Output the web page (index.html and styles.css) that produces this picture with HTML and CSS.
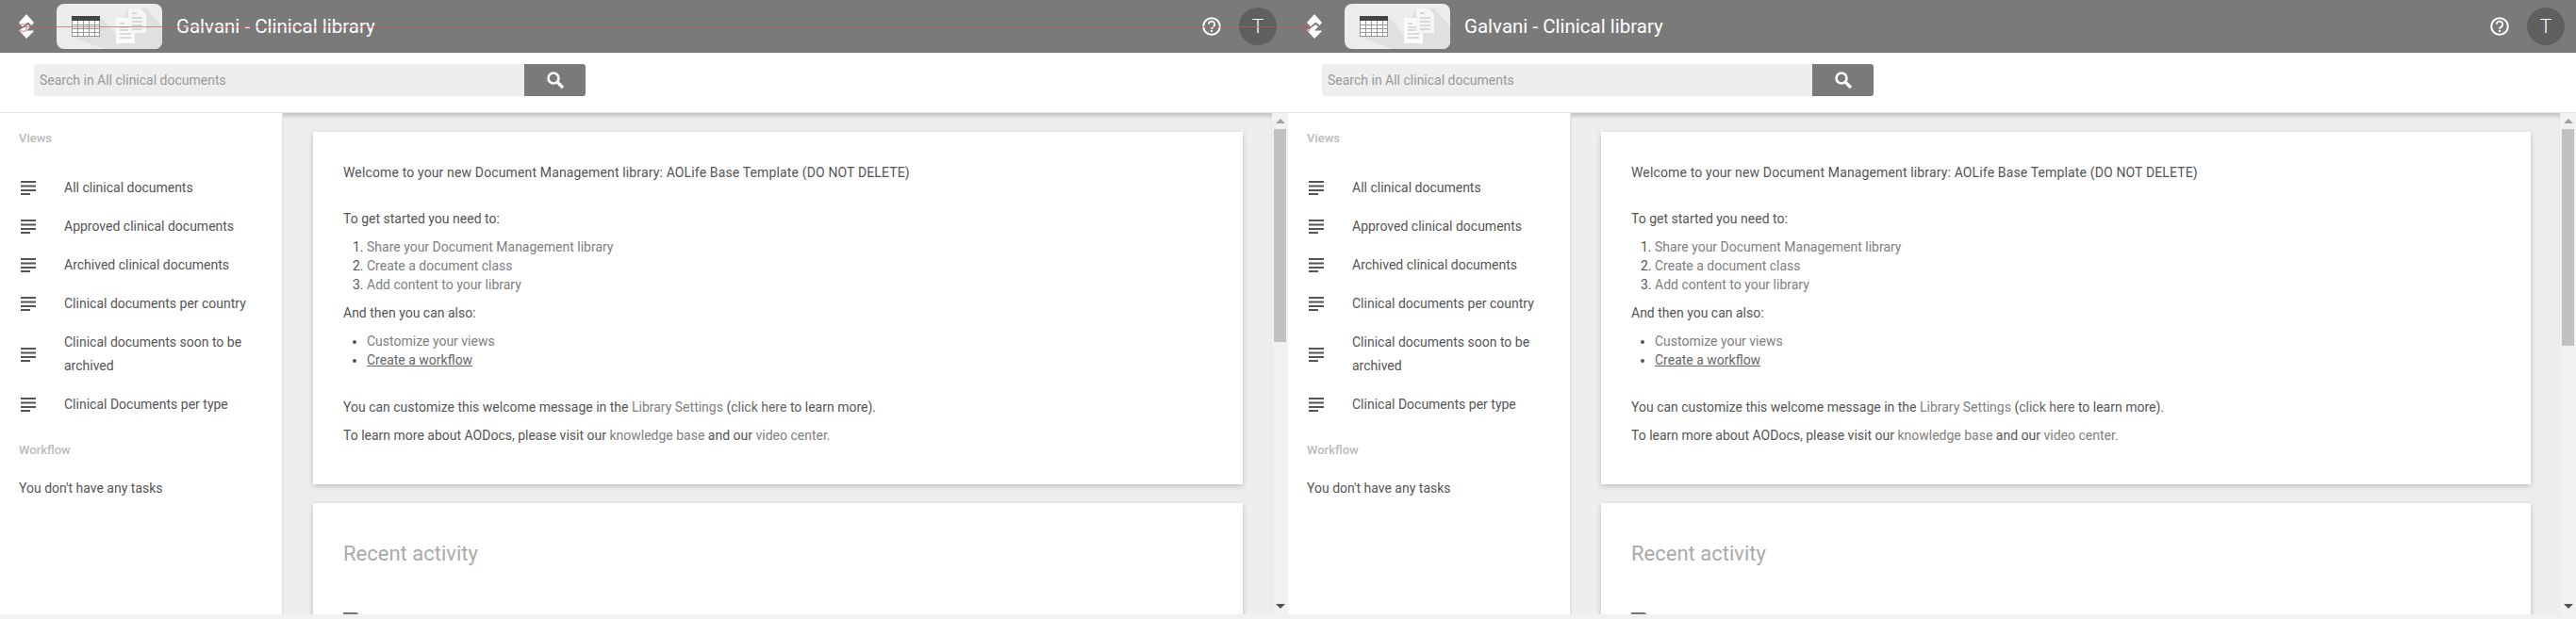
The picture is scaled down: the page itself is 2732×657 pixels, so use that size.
FILE: index.html
```html
<!DOCTYPE html>
<html lang="en">
<head>
    <meta charset="UTF-8">
    <title>Galvani - Clinical library</title>
    <link rel="stylesheet" href="styles.css">
</head>
<body>
    <svg class="defs" width="0" height="0">
        <symbol id="i-switch" viewBox="0 0 16 26">
            <path fill="#fff" d="M8 0 16 9 13.5 12 9.5 8.5 3.5 13.5 0 9Z"/>
            <path fill="#fff" d="M4 15 9.5 11 12 13.5 8 17.5 15 17.5 16 18 8 26 0 17Z"/>
        </symbol>
        <symbol id="i-logo" viewBox="0 0 112 48">
            <path fill="#e0e0e0" d="M16 13H46L76 48H51L16 35Z"/>
            <path fill="#e0e0e0" d="M76 5H95L112 24V48H76L63 33Z"/>
            <rect x="16" y="13" width="30" height="22" fill="#fff"/>
            <rect x="16" y="13" width="30" height="5" fill="#444"/>
            <path stroke="#999" fill="none" d="M16.5 18V35M22.5 18V35M28.5 18V35M34.5 18V35M40.5 18V35M45.5 18V35M16 22.5H46M16 26.5H46M16 30.5H46M16 34.5H46"/>
            <path fill="#fafafa" d="M63 15H83V42H63Z"/>
            <path stroke="#bbb" fill="none" d="M67 21H72M67 25H79M67 28H79M67 32H79M67 36H79"/>
            <path fill="#f5f5f5" d="M76 5H89L95 11V31H76Z"/>
            <path stroke="#bbb" fill="none" d="M80 10H85M80 15H91M80 19H91M80 23H91M80 27H91"/>
        </symbol>
        <symbol id="i-help" viewBox="0 0 20 20">
            <circle cx="10" cy="10" r="8.8" fill="none" stroke="#fff" stroke-width="2"/>
            <path d="M6.8 7.8A3.2 3.2 0 1 1 11.6 10.6C10.5 11.3 10 11.7 10 13" fill="none" stroke="#fff" stroke-width="1.8"/>
            <rect x="9" y="14" width="2" height="2" fill="#fff"/>
        </symbol>
        <symbol id="i-search" viewBox="0 0 20 20">
            <circle cx="8" cy="8" r="5.5" fill="none" stroke="#fff" stroke-width="2.6"/>
            <path d="M12 12 18 18" stroke="#fff" stroke-width="3.2"/>
        </symbol>
        <symbol id="i-list" viewBox="0 0 16 15">
            <path stroke="#555" stroke-width="2" d="M0 1H16M0 5.5H16M0 10H16M0 14H10"/>
        </symbol>
    </svg>

    <section class="pane">
        <header class="topbar">
            <svg class="switch-icon"><use href="#i-switch"/></svg>
            <svg class="logo"><use href="#i-logo"/></svg>
            <h1 class="title">Galvani - Clinical library</h1>
            <svg class="help-icon"><use href="#i-help"/></svg>
            <div class="avatar">T</div>
        </header>
        <div class="searchrow">
            <input class="search-input" type="text" placeholder="Search in All clinical documents">
            <button class="search-btn" type="button"><svg class="search-icon"><use href="#i-search"/></svg></button>
        </div>
        <div class="pane-body">
            <aside class="sidebar">
                <div class="side-label">Views</div>
                <ul class="views">
                    <li class="view"><svg class="list-icon"><use href="#i-list"/></svg><span>All clinical documents</span></li>
                    <li class="view"><svg class="list-icon"><use href="#i-list"/></svg><span>Approved clinical documents</span></li>
                    <li class="view"><svg class="list-icon"><use href="#i-list"/></svg><span>Archived clinical documents</span></li>
                    <li class="view"><svg class="list-icon"><use href="#i-list"/></svg><span>Clinical documents per country</span></li>
                    <li class="view"><svg class="list-icon"><use href="#i-list"/></svg><span>Clinical documents soon to be archived</span></li>
                    <li class="view"><svg class="list-icon"><use href="#i-list"/></svg><span>Clinical Documents per type</span></li>
                </ul>
                <div class="side-label side-label-workflow">Workflow</div>
                <p class="no-tasks">You don't have any tasks</p>
            </aside>
            <main class="content">
                <div class="card card-welcome">
                    <p class="welcome-line">Welcome to your new Document Management library: AOLife Base Template (DO NOT DELETE)</p>
                    <p>To get started you need to:</p>
                    <ol class="steps">
                        <li><a>Share your Document Management library</a></li>
                        <li><a>Create a document class</a></li>
                        <li><a>Add content to your library</a></li>
                    </ol>
                    <p>And then you can also:</p>
                    <ul class="steps">
                        <li><a>Customize your views</a></li>
                        <li><a class="underlined">Create a workflow</a></li>
                    </ul>
                    <p class="customize-line">You can customize this welcome message in the <a>Library Settings</a> (<a class="dark">click here</a> to learn more).</p>
                    <p class="learn-line">To learn more about AODocs, please visit our <a>knowledge base</a> and our <a>video center.</a></p>
                </div>
                <div class="card card-activity">
                    <h2 class="activity-title">Recent activity</h2>
                    <svg class="activity-icon" width="20" height="20"><path d="M1 20V2H14L19 7V20" fill="none" stroke="#777" stroke-width="2"/></svg>
                </div>
            </main>
            <div class="scrollbar">
                <span class="arrow-up"></span>
                <span class="thumb"></span>
                <span class="arrow-down"></span>
            </div>
        </div>
        <div class="bottom-strip"></div>
    </section>

    <section class="pane pane-right">
        <header class="topbar">
            <svg class="switch-icon"><use href="#i-switch"/></svg>
            <svg class="logo"><use href="#i-logo"/></svg>
            <h1 class="title">Galvani - Clinical library</h1>
            <svg class="help-icon"><use href="#i-help"/></svg>
            <div class="avatar">T</div>
        </header>
        <div class="searchrow">
            <input class="search-input" type="text" placeholder="Search in All clinical documents">
            <button class="search-btn" type="button"><svg class="search-icon"><use href="#i-search"/></svg></button>
        </div>
        <div class="pane-body">
            <aside class="sidebar">
                <div class="side-label">Views</div>
                <ul class="views">
                    <li class="view"><svg class="list-icon"><use href="#i-list"/></svg><span>All clinical documents</span></li>
                    <li class="view"><svg class="list-icon"><use href="#i-list"/></svg><span>Approved clinical documents</span></li>
                    <li class="view"><svg class="list-icon"><use href="#i-list"/></svg><span>Archived clinical documents</span></li>
                    <li class="view"><svg class="list-icon"><use href="#i-list"/></svg><span>Clinical documents per country</span></li>
                    <li class="view"><svg class="list-icon"><use href="#i-list"/></svg><span>Clinical documents soon to be archived</span></li>
                    <li class="view"><svg class="list-icon"><use href="#i-list"/></svg><span>Clinical Documents per type</span></li>
                </ul>
                <div class="side-label side-label-workflow">Workflow</div>
                <p class="no-tasks">You don't have any tasks</p>
            </aside>
            <main class="content">
                <div class="card card-welcome">
                    <p class="welcome-line">Welcome to your new Document Management library: AOLife Base Template (DO NOT DELETE)</p>
                    <p>To get started you need to:</p>
                    <ol class="steps">
                        <li><a>Share your Document Management library</a></li>
                        <li><a>Create a document class</a></li>
                        <li><a>Add content to your library</a></li>
                    </ol>
                    <p>And then you can also:</p>
                    <ul class="steps">
                        <li><a>Customize your views</a></li>
                        <li><a class="underlined">Create a workflow</a></li>
                    </ul>
                    <p class="customize-line">You can customize this welcome message in the <a>Library Settings</a> (<a class="dark">click here</a> to learn more).</p>
                    <p class="learn-line">To learn more about AODocs, please visit our <a>knowledge base</a> and our <a>video center.</a></p>
                </div>
                <div class="card card-activity">
                    <h2 class="activity-title">Recent activity</h2>
                    <svg class="activity-icon" width="20" height="20"><path d="M1 20V2H14L19 7V20" fill="none" stroke="#777" stroke-width="2"/></svg>
                </div>
            </main>
            <div class="scrollbar">
                <span class="arrow-up"></span>
                <span class="thumb"></span>
                <span class="arrow-down"></span>
            </div>
        </div>
        <div class="bottom-strip"></div>
    </section>

    <div class="red-line"></div>
</body>
</html>
```

FILE: styles.css
```css
* { box-sizing: border-box; }
html, body { height: 100%; }
body { margin: 0; display: flex; width: 2732px; height: 657px; overflow: hidden; position: relative; font-family: Roboto, "Liberation Sans", Arial, sans-serif; font-size: 14px; color: #555; background: #fff; }
.defs { position: absolute; }
.pane { width: 1366px; height: 657px; display: flex; flex-direction: column; }

/* top bar */
.topbar { height: 56px; flex: none; display: flex; align-items: center; padding: 0 12px 0 20px; background: #7a7a7a; color: #fff; }
.switch-icon { width: 16px; height: 26px; flex: none; }
.logo { width: 112px; height: 48px; flex: none; margin-left: 24px; background: #ececec; border-radius: 8px; }
.title { margin: 0 0 0 15px; flex: 1; font-size: 20.5px; font-weight: 400; }
.help-icon { width: 20px; height: 20px; flex: none; }
.avatar { width: 40px; height: 40px; flex: none; margin-left: 19px; border-radius: 50%; background: #5f5f5f; display: flex; align-items: center; justify-content: center; font-size: 21px; font-weight: 300; }

/* search */
.searchrow { height: 64px; flex: none; display: flex; align-items: flex-start; padding: 12px 0 0 36px; border-bottom: 1px solid #e3e3e3; }
.search-input { width: 520px; height: 34px; padding: 0 6px; border: 0; border-radius: 3px 0 0 3px; background: #eee; font: 14px Roboto, "Liberation Sans", sans-serif; }
.search-input::placeholder { color: #999; opacity: 1; }
.search-btn { width: 65px; height: 34px; padding: 0; border: 0; border-radius: 0 3px 3px 0; background: #7a7a7a; display: flex; align-items: center; justify-content: center; }
.search-icon { width: 20px; height: 20px; }

/* body */
.pane-body { flex: 1; min-height: 0; display: flex; }
.bottom-strip { height: 5px; flex: none; background: #f1f1f1; }

/* sidebar */
.sidebar { width: 300px; flex: none; padding: 17px 20px 0; background: #fff; border-right: 1px solid #e3e3e3; }
.side-label { font-size: 13px; font-weight: 500; line-height: 20px; color: #bbb; }
.side-label-workflow { margin-top: 18px; }
.views { list-style: none; margin: 22px 0 0; padding: 0; }
.view { display: flex; align-items: center; padding: 8px 0; line-height: 25px; }
.list-icon { width: 16px; height: 15px; flex: none; margin: 0 30px 0 2px; }
.no-tasks { margin: 18px 0 0; line-height: 25px; }

/* main column */
.content { flex: 1; min-width: 0; overflow: hidden; padding: 20px 31px 0 32px; background: #eee; box-shadow: inset 0 6px 5px -3px rgba(0, 0, 0, 0.2); }
.card { background: #fff; box-shadow: 0 2px 6px rgba(0, 0, 0, 0.2); padding: 0 32px; }
.card-welcome { height: 374px; padding-top: 33px; line-height: 20px; }
.card-welcome p { margin: 0; }
.card-welcome a { color: #808080; }
.card-welcome a.dark { color: #666; }
.card-welcome a.underlined { color: #666; text-decoration: underline; }
.card-welcome .welcome-line { margin-bottom: 29px; letter-spacing: 0.14px; }
.steps { margin: 10px 0; padding-left: 25px; }
.card-welcome .customize-line { margin-top: 30px; }
.card-welcome .learn-line { margin-top: 10px; }
.card-activity { margin-top: 20px; height: 300px; padding-top: 38px; }
.activity-title { margin: 0; font-size: 22px; font-weight: 400; line-height: 32px; color: #aaa; }
.activity-icon { display: block; margin-top: 45px; }

/* scrollbar */
.scrollbar { width: 17px; flex: none; position: relative; background: #f1f1f1; }
.thumb { display: block; width: 13px; height: 226px; margin: 17px 0 0 2px; background: #c1c1c1; }
.pane-right .thumb { height: 230px; }
.arrow-up, .arrow-down { position: absolute; left: 4px; width: 0; height: 0; border-left: 5px solid transparent; border-right: 5px solid transparent; }
.arrow-up { top: 6px; border-bottom: 5px solid #a3a3a3; }
.arrow-down { bottom: 6px; border-top: 5px solid #505050; }

/* stray red guide line lying over the first pane */
.red-line { position: absolute; left: 20px; top: 28px; width: 1370px; height: 1px; background: rgba(190, 90, 90, 0.65); }
.red-line::before, .red-line::after { content: ""; position: absolute; top: -3px; width: 7px; height: 7px; border: 1px solid rgba(190, 90, 90, 0.8); border-radius: 50%; }
.red-line::before { left: 0; }
.red-line::after { right: 0; }
```
